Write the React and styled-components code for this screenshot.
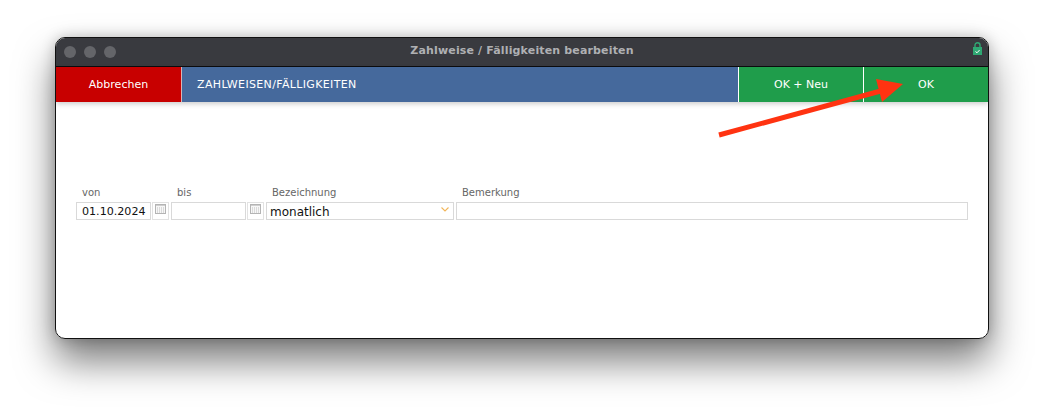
import React from 'react';
import styled, { createGlobalStyle } from 'styled-components';

const GlobalStyle = createGlobalStyle`
  html, body {
    margin: 0;
    background: #fff;
    overflow: hidden;
  }
  body {
    font-family: "DejaVu Sans", Verdana, sans-serif;
  }
`;

const Page = styled.div`
  width: 1044px;
  height: 412px;
  padding: 37px 0 0 55px;
  box-sizing: border-box;
  position: relative;
`;

const Window = styled.div`
  position: relative;
  width: 934px;
  height: 302px;
  box-sizing: border-box;
  border: 1px solid #111;
  border-radius: 10px;
  overflow: hidden;
  background: #fff;
  display: flex;
  flex-direction: column;
`;

const Shadow = styled.div`
  position: absolute;
  left: 55px;
  top: 37px;
  width: 934px;
  height: 302px;
  border-radius: 10px;
  box-shadow: 0 22px 38px rgba(0, 0, 0, 0.52), 0 0 14px rgba(0, 0, 0, 0.22);
`;

const TitleBar = styled.div`
  height: 29px;
  flex: none;
  box-sizing: border-box;
  background: #393a3f;
  border-bottom: 1px solid #0c0c0e;
  display: flex;
  align-items: center;
  position: relative;
`;

const Lights = styled.div`
  display: flex;
  gap: 8px;
  padding-left: 8px;
`;

const Light = styled.span`
  width: 12px;
  height: 12px;
  border-radius: 50%;
  background: #646569;
`;

const Title = styled.div`
  position: absolute;
  left: 0;
  right: 0;
  top: 5px;
  text-align: center;
  font-size: 11px;
  line-height: 16px;
  font-weight: 700;
  letter-spacing: 0.15px;
  color: #afb0b3;
`;

const Lock = styled.svg`
  position: absolute;
  right: 6px;
  top: 4px;
`;

const Toolbar = styled.div`
  height: 35px;
  flex: none;
  display: flex;
  box-shadow: 0 2px 5px rgba(0, 0, 0, 0.2);
  position: relative;
`;

const ToolButton = styled.div`
  width: ${(p) => p.$width}px;
  flex: none;
  box-sizing: border-box;
  display: flex;
  align-items: center;
  justify-content: center;
  background: ${(p) => p.$color};
  border-right: ${(p) => (p.$divider ? `1px solid ${p.$divider}` : 'none')};
  color: #fff;
  font-size: 11px;
`;

const Heading = styled.div`
  flex: 1;
  box-sizing: border-box;
  display: flex;
  align-items: center;
  padding-left: 15px;
  background: #45699c;
  border-right: 1px solid #fff;
  color: #fff;
  font-size: 11px;
  letter-spacing: 0.35px;
`;

const Content = styled.div`
  flex: 1;
  padding: 84px 20px 0;
`;

const Fields = styled.div`
  display: flex;
  align-items: flex-end;
  gap: 2px;
`;

const Field = styled.div`
  width: ${(p) => p.$width}px;
  flex: none;
`;

const Label = styled.div`
  height: 16px;
  padding-left: 6px;
  font-size: 10px;
  line-height: 13px;
  color: #666;
`;

const InputRow = styled.div`
  display: flex;
  gap: 1px;
`;

const Input = styled.div`
  flex: 1;
  height: 18px;
  box-sizing: border-box;
  border: 1px solid #d9d9d9;
  padding-left: ${(p) => p.$indent || 5}px;
  padding-top: 1px;
  display: flex;
  align-items: center;
  justify-content: space-between;
  font-size: ${(p) => p.$size || 11.1}px;
  color: #111;
`;

const CalendarBox = styled.div`
  width: 17px;
  height: 18px;
  flex: none;
  box-sizing: border-box;
  border: 1px solid #e2e2e2;
  display: flex;
  justify-content: center;
  padding-top: 1px;
`;

const Arrow = styled.svg`
  position: absolute;
  left: 0;
  top: 0;
  pointer-events: none;
`;

const Chevron = styled.svg`
  margin-right: 4px;
  margin-bottom: 5px;
`;

const Calendar = () => (
  <svg width="11" height="10" viewBox="0 0 11 10">
    <rect x="0.5" y="0.5" width="10" height="9" fill="#f7f7f7" stroke="#b4b4b4" />
    <rect x="1" y="1" width="9" height="1" fill="#cfcfcf" />
    <path d="M2 4h7M2 6h7M2 8h7" stroke="#bdbdbd" strokeDasharray="1 1" />
  </svg>
);

export default function App() {
  return (
    <Page>
      <GlobalStyle />
      <Shadow />
      <Window>
        <TitleBar>
          <Lights>
            <Light />
            <Light />
            <Light />
          </Lights>
          <Title>Zahlweise / Fälligkeiten bearbeiten</Title>
          <Lock width="9" height="13" viewBox="0 0 9 13">
            <path d="M2 6V3.2a2.5 2.5 0 0 1 5 0V6" fill="none" stroke="#2fa873" strokeWidth="1.4" />
            <rect x="0" y="5" width="9" height="8" fill="#2fa873" />
            <path d="M2.5 9.5l1.5 1.3 2.6-2.8" fill="none" stroke="#fff" strokeWidth="1" />
          </Lock>
        </TitleBar>
        <Toolbar>
          <ToolButton $width={126} $color="#c80000" $divider="#d9b5b5">
            Abbrechen
          </ToolButton>
          <Heading>ZAHLWEISEN/FÄLLIGKEITEN</Heading>
          <ToolButton $width={125} $color="#1f9d4b" $divider="#fff">
            OK + Neu
          </ToolButton>
          <ToolButton $width={124} $color="#1f9d4b">
            OK
          </ToolButton>
        </Toolbar>
        <Content>
          <Fields>
            <Field $width={93}>
              <Label>von</Label>
              <InputRow>
                <Input>01.10.2024</Input>
                <CalendarBox>
                  <Calendar />
                </CalendarBox>
              </InputRow>
            </Field>
            <Field $width={93}>
              <Label>bis</Label>
              <InputRow>
                <Input />
                <CalendarBox>
                  <Calendar />
                </CalendarBox>
              </InputRow>
            </Field>
            <Field $width={188}>
              <Label>Bezeichnung</Label>
              <Input $indent={3} $size={12}>
                monatlich
                <Chevron width="8" height="5" viewBox="0 0 8 5">
                  <path d="M0.5 0.5L4 4l3.5-3.5" fill="none" stroke="#f2b65a" strokeWidth="1.1" />
                </Chevron>
              </Input>
            </Field>
            <Field $width={512}>
              <Label>Bemerkung</Label>
              <Input />
            </Field>
          </Fields>
        </Content>
      </Window>
      <Arrow width="1044" height="412" viewBox="0 0 1044 412">
        <path d="M719 135L888 89" stroke="#ff3311" strokeWidth="5" />
        <path d="M903 84L876 79L882 102Z" fill="#ff3311" />
      </Arrow>
    </Page>
  );
}
